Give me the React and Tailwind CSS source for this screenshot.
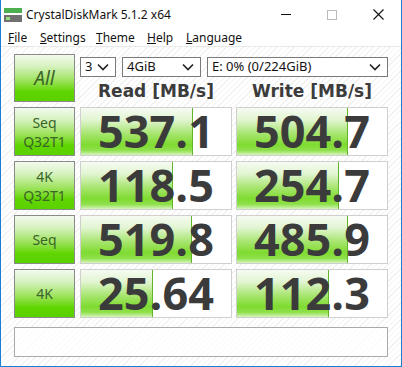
import React from 'react'

const rows = [
  { label: ['Seq', 'Q32T1'], read: '537.1', write: '504.7' },
  { label: ['4K', 'Q32T1'], read: '118.5', write: '254.7' },
  { label: ['Seq'], read: '519.8', write: '485.9' },
  { label: ['4K'], read: '25.64', write: '112.3' },
]

const barWidth = (v) => Math.round(30 * (Math.log10(parseFloat(v)) + 1))

const Chevron = () => (
  <svg width="12" height="8" viewBox="0 0 12 8" className="shrink-0">
    <polyline points="1,1.5 6,6.5 11,1.5" fill="none" stroke="#222" strokeWidth="1.6" />
  </svg>
)

const Select = ({ value, className }) => (
  <div className={`flex h-[20px] items-center justify-between border border-[#7a7a7a] bg-white pl-[4px] pr-[6px] text-[13px] text-[#111] ${className}`}>
    <span>{value}</span>
    <Chevron />
  </div>
)

const GreenButton = ({ children, className }) => (
  <div className={`flex w-[61px] flex-col items-center justify-center border border-[#8a8a8a] bg-[linear-gradient(180deg,#f3faee_0%,#d6f2bf_25%,#9ee35e_55%,#5fd500_80%,#5ad200_100%)] leading-[19px] text-[#3b6329] ${className}`}>
    {children}
  </div>
)

const ValueBox = ({ value, width }) => (
  <div className="relative h-full border border-[#cfcfcf] bg-white">
    <div
      className="absolute bottom-0 left-0 top-0 border-r border-[#62b52a] bg-[linear-gradient(180deg,#f6fbf2_0%,#e2f5d2_25%,#a6e56e_55%,#7fdb30_78%,#8fe04c_90%,#d6f4bd_100%)]"
      style={{ width }}
    />
    <div className="relative flex h-full items-center justify-center pb-[2px] font-['Open_Sans',sans-serif] text-[45px] font-bold leading-none text-[#3b3b3b]">
      {value}
    </div>
  </div>
)

export default function App() {
  return (
    <div className="flex h-[367px] w-[402px] flex-col border-x border-b border-[#1a7fd4] bg-white font-['Noto_Sans',sans-serif]">
      {/* title bar */}
      <div className="flex h-[29px] shrink-0 items-center">
        <svg width="18" height="14" viewBox="0 0 18 14" className="ml-[3px]">
          <rect x="0" y="0" width="18" height="5" fill="#4cb050" />
          <rect x="0" y="7" width="18" height="7" fill="#707070" />
          <rect x="2" y="9" width="4" height="3" fill="#9be07a" />
        </svg>
        <span className="ml-[4px] text-[12px] text-[#111]">CrystalDiskMark 5.1.2 x64</span>
        <div className="ml-auto flex items-center">
          <div className="flex w-[46px] justify-center">
            <div className="h-[1px] w-[10px] bg-[#111]" />
          </div>
          <div className="flex w-[46px] justify-center">
            <div className="h-[10px] w-[10px] border border-[#bbb]" />
          </div>
          <div className="flex w-[46px] justify-center">
            <svg width="11" height="11" viewBox="0 0 11 11">
              <path d="M0.5 0.5 L10.5 10.5 M10.5 0.5 L0.5 10.5" stroke="#111" strokeWidth="1.1" />
            </svg>
          </div>
        </div>
      </div>
      {/* menu bar */}
      <div className="flex h-[17px] shrink-0 items-center pl-[7px] text-[12px] text-[#111]">
        <span className="w-[32px]"><u>F</u>ile</span>
        <span className="w-[56px]"><u>S</u>ettings</span>
        <span className="w-[51px]"><u>T</u>heme</span>
        <span className="w-[39px]"><u>H</u>elp</span>
        <span><u>L</u>anguage</span>
      </div>
      {/* body */}
      <div className="flex flex-1 flex-col border-t border-[#e8e8e8] bg-[repeating-linear-gradient(135deg,#ffffff_0px,#ffffff_3px,#f1f1f1_3px,#f1f1f1_4px)] pl-[13px] pr-[13px] pt-[7px]">
        <div className="flex h-[48px] gap-[5px]">
          <GreenButton className="h-[48px]">
            <span className="text-[19px] italic">All</span>
          </GreenButton>
          <div className="flex flex-1 flex-col">
            <div className="mt-[3px] flex gap-[6px]">
              <Select value="3" className="w-[36px]" />
              <Select value="4GiB" className="w-[79px]" />
              <Select value="E: 0% (0/224GiB)" className="flex-1" />
            </div>
            <div className="mt-[2px] flex font-['DejaVu_Sans',sans-serif] text-[17px] font-bold text-[#3c3c3c]">
              <div className="w-[152px] text-center">Read [MB/s]</div>
              <div className="ml-[4px] flex-1 text-center">Write [MB/s]</div>
            </div>
          </div>
        </div>
        {rows.map((r) => (
          <div key={r.label.join('')} className="mt-[5px] flex h-[49px] gap-[5px]">
            <GreenButton className="h-full text-[14px]">
              {r.label.map((l) => (
                <span key={l}>{l}</span>
              ))}
            </GreenButton>
            <div className="w-[152px]">
              <ValueBox value={r.read} width={barWidth(r.read)} />
            </div>
            <div className="ml-[-1px] flex-1">
              <ValueBox value={r.write} width={barWidth(r.write)} />
            </div>
          </div>
        ))}
        <div className="mt-[9px] h-[30px] border border-[#aaaaaa] bg-white/70" />
      </div>
    </div>
  )
}
